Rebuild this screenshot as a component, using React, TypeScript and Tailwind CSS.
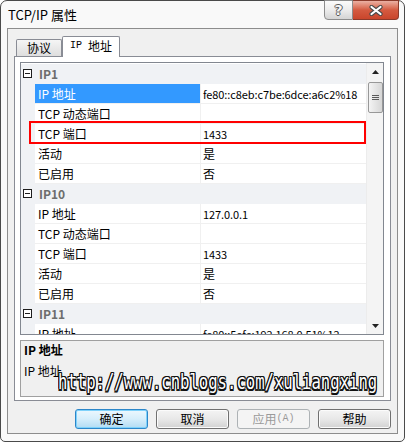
import React from "react";

type Row = { name: string; value: string; selected?: boolean };
type Group = { name: string; rows: Row[] };

const groups: Group[] = [
  {
    name: "IP1",
    rows: [
      { name: "IP 地址", value: "fe80::c8eb:c7be:6dce:a6c2%18", selected: true },
      { name: "TCP 动态端口", value: "" },
      { name: "TCP 端口", value: "1433" },
      { name: "活动", value: "是" },
      { name: "已启用", value: "否" },
    ],
  },
  {
    name: "IP10",
    rows: [
      { name: "IP 地址", value: "127.0.0.1" },
      { name: "TCP 动态端口", value: "" },
      { name: "TCP 端口", value: "1433" },
      { name: "活动", value: "是" },
      { name: "已启用", value: "否" },
    ],
  },
  {
    name: "IP11",
    rows: [
      { name: "IP 地址", value: "fe80::5efe:192.168.0.51%12" },
      { name: "TCP 动态端口", value: "" },
    ],
  },
];

function Minus() {
  return (
    <svg width="9" height="9" viewBox="0 0 9 9" className="block">
      <rect x="0.5" y="0.5" width="8" height="8" fill="#fff" stroke="#1e1e1e" />
      <line x1="2" y1="4.5" x2="7" y2="4.5" stroke="#1e1e1e" />
    </svg>
  );
}

function CategoryRow({ name }: { name: string }) {
  return (
    <div className="flex h-[20px] shrink-0 bg-[#f0f2f5]">
      <div className="w-[14px] flex items-center pl-[2px] pb-[2px]">
        <Minus />
      </div>
      <div className="pl-[4px] flex items-center text-[12px] leading-[16px] font-bold text-[#6d6d6d]">
        {name}
      </div>
    </div>
  );
}

function PropRow({ row }: { row: Row }) {
  const isLatin = /^[\x00-\x7f]*$/.test(row.value);
  return (
    <div className="flex h-[20px] shrink-0">
      <div className="w-[14px] bg-[#f0f2f5]" />
      <div
        className={
          row.selected
            ? "w-[166px] border-r border-b border-[#f0f0f0] bg-[#3399ff] text-white pl-[3px] flex items-center text-[12px] leading-[16px] whitespace-nowrap"
            : "w-[166px] border-r border-b border-[#f0f0f0] pl-[3px] flex items-center text-[12px] leading-[16px] whitespace-nowrap"
        }
      >
        {row.name}
      </div>
      <div
        className={
          isLatin
            ? "flex-1 border-b border-[#f0f0f0] pl-[2px] flex items-center text-[11px] tracking-[-0.1px] leading-[16px] whitespace-nowrap overflow-hidden"
            : "flex-1 border-b border-[#f0f0f0] pl-[2px] flex items-center text-[12px] leading-[16px] whitespace-nowrap overflow-hidden"
        }
      >
        {row.value}
      </div>
    </div>
  );
}

function ScrollBar() {
  return (
    <div className="w-[17px] h-full bg-[#f4f4f4] border-l border-[#ececec] flex flex-col items-center">
      <div className="h-[17px] w-full flex items-center justify-center">
        <svg width="7" height="4" viewBox="0 0 7 4">
          <polygon points="3.5,0 7,4 0,4" fill="#222" />
        </svg>
      </div>
      <div className="mt-[2px] w-[15px] h-[31px] rounded-[2px] border border-[#989898] bg-gradient-to-r from-[#f4f4f4] to-[#d6d6d6] flex flex-col items-center justify-center gap-[1px]">
        <div className="w-[7px] h-[1px] bg-[#5a5a5a]" />
        <div className="w-[7px] h-[1px] bg-[#5a5a5a]" />
        <div className="w-[7px] h-[1px] bg-[#5a5a5a]" />
      </div>
      <div className="flex-1" />
      <div className="h-[17px] w-full flex items-center justify-center">
        <svg width="7" height="4" viewBox="0 0 7 4">
          <polygon points="0,0 7,0 3.5,4" fill="#222" />
        </svg>
      </div>
    </div>
  );
}

export default function App() {
  return (
    <div className="w-[405px] h-[443px] bg-white font-['Noto_Sans_CJK_SC',sans-serif] text-black">
      <div className="w-[405px] h-[442px] border border-[#4a4a4a] rounded-t-[7px] rounded-b-[5px] bg-[#f9f9f9] flex flex-col">
        {/* Title bar */}
        <div className="h-[27px] shrink-0 flex items-start justify-between">
          <div className="pl-[7px] pt-[6px] text-[13px] leading-[16px] text-black">TCP/IP 属性</div>
          <div className="flex mr-[5px] -mt-[1px] relative z-10">
            <div className="w-[29px] h-[20px] border border-[#8c8c8c] rounded-bl-[4px] bg-gradient-to-b from-[#fbfbfb] via-[#ececec] to-[#d4d4d4] flex items-center justify-center text-[14px] leading-[14px] font-bold font-['DejaVu_Sans',sans-serif] text-[#f6f6f6] [text-shadow:1px_0_0_#5a5a5a,-1px_0_0_#5a5a5a,0_1px_0_#5a5a5a,0_-1px_0_#5a5a5a]">
              ?
            </div>
            <div className="w-[46px] h-[20px] border border-l-0 border-[#8b3a2b] rounded-br-[4px] bg-gradient-to-b from-[#eab0a3] via-[#d45a40] to-[#c9452b] flex items-center justify-center">
              <svg width="16" height="11" viewBox="0 0 16 11">
                <path d="M3.5 2 L12.5 9 M12.5 2 L3.5 9" stroke="#4a4a4a" strokeWidth="4.2" strokeLinecap="round" />
                <path d="M3.5 2 L12.5 9 M12.5 2 L3.5 9" stroke="#ffffff" strokeWidth="2.2" strokeLinecap="round" />
              </svg>
            </div>
          </div>
        </div>

        {/* Client area */}
        <div className="ml-[6px] w-[391px] h-[406px] shrink-0 border border-[#8d8d8d] bg-[#f0f0f0] pt-[7px] px-[6px] flex flex-col">
          {/* Tabs */}
          <div className="h-[20px] flex items-end pl-[2px]">
            <div className="w-[46px] h-[17px] border border-b-0 border-[#898c95] rounded-t-[2px] bg-gradient-to-b from-[#f5f5f5] to-[#dedede] flex items-center justify-center text-[12px] leading-[14px]">
              协议
            </div>
            <div className="w-[58px] h-[21px] -mb-[1px] relative z-10 border border-b-0 border-[#898c95] rounded-t-[2px] bg-white flex items-center justify-center text-[12px] leading-[14px] pb-[2px] whitespace-nowrap">
              <span className="font-['Liberation_Mono',monospace] text-[10px]">IP&nbsp;</span>
              <span>地址</span>
            </div>
          </div>

          {/* Tab panel */}
          <div className="w-[377px] h-[345px] border border-[#898c95] bg-white pt-[5px] pl-[5px] flex flex-col">
            {/* Property grid */}
            <div className="w-[364px] h-[273px] shrink-0 border border-[#828790] bg-white relative flex">
              <div className="w-[345px] h-full flex flex-col pt-[1px] overflow-hidden">
                {groups.map((g) => (
                  <React.Fragment key={g.name}>
                    <CategoryRow name={g.name} />
                    {g.rows.map((r, i) => (
                      <PropRow key={g.name + i} row={r} />
                    ))}
                  </React.Fragment>
                ))}
              </div>
              <ScrollBar />
              <div className="absolute left-[8px] top-[58px] w-[337px] h-[23px] border-2 border-[#ff0000] z-10" />
            </div>

            {/* Description */}
            <div className="mt-[5px] w-[364px] h-[57px] shrink-0 border border-[#a0a0a0] bg-[#f0f0f0] relative pl-[3px] pt-[1px]">
              <div className="text-[12px] leading-[16px] font-bold">IP 地址</div>
              <div className="mt-[5px] text-[12px] leading-[16px]">IP 地址</div>
              <div className="absolute left-[37px] top-[30px] origin-top-left scale-y-[1.4] whitespace-nowrap font-['DejaVu_Sans_Mono',monospace] text-[15.6px] leading-[16px] text-white [text-shadow:1px_0_0_#111,-1px_0_0_#111,0_1px_0_#111,0_-1px_0_#111,1px_1px_0_#111,-1px_-1px_0_#111,1px_-1px_0_#111,-1px_1px_0_#111]">
                http://www.cnblogs.com/xuliangxing
              </div>
            </div>
          </div>

          {/* Buttons */}
          <div className="mt-[8px] flex justify-end gap-[8px]">
            <div className="w-[73px] h-[20px] rounded-[3px] border border-[#2c86c9] shadow-[inset_0_0_0_1px_#7fd2fb] bg-gradient-to-b from-[#edf8fe] via-[#d6eefb] to-[#b3dcf3] flex items-center justify-center text-[12px] leading-[14px]">
              确定
            </div>
            <div className="w-[73px] h-[20px] rounded-[3px] border border-[#707070] shadow-[inset_0_0_0_1px_#fbfbfb] bg-gradient-to-b from-[#f4f4f4] via-[#e8e8e8] to-[#d2d2d2] flex items-center justify-center text-[12px] leading-[14px]">
              取消
            </div>
            <div className="w-[73px] h-[20px] rounded-[3px] border border-[#adb2b5] bg-[#f4f4f4] flex items-center justify-center text-[12px] leading-[14px] text-[#9a9a9a] whitespace-nowrap">
              <span>应用</span>
              <span className="font-['Liberation_Mono',monospace] text-[10px]">(A)</span>
            </div>
            <div className="w-[73px] h-[20px] rounded-[3px] border border-[#707070] shadow-[inset_0_0_0_1px_#fbfbfb] bg-gradient-to-b from-[#f4f4f4] via-[#e8e8e8] to-[#d2d2d2] flex items-center justify-center text-[12px] leading-[14px]">
              帮助
            </div>
          </div>
        </div>
      </div>
    </div>
  );
}
